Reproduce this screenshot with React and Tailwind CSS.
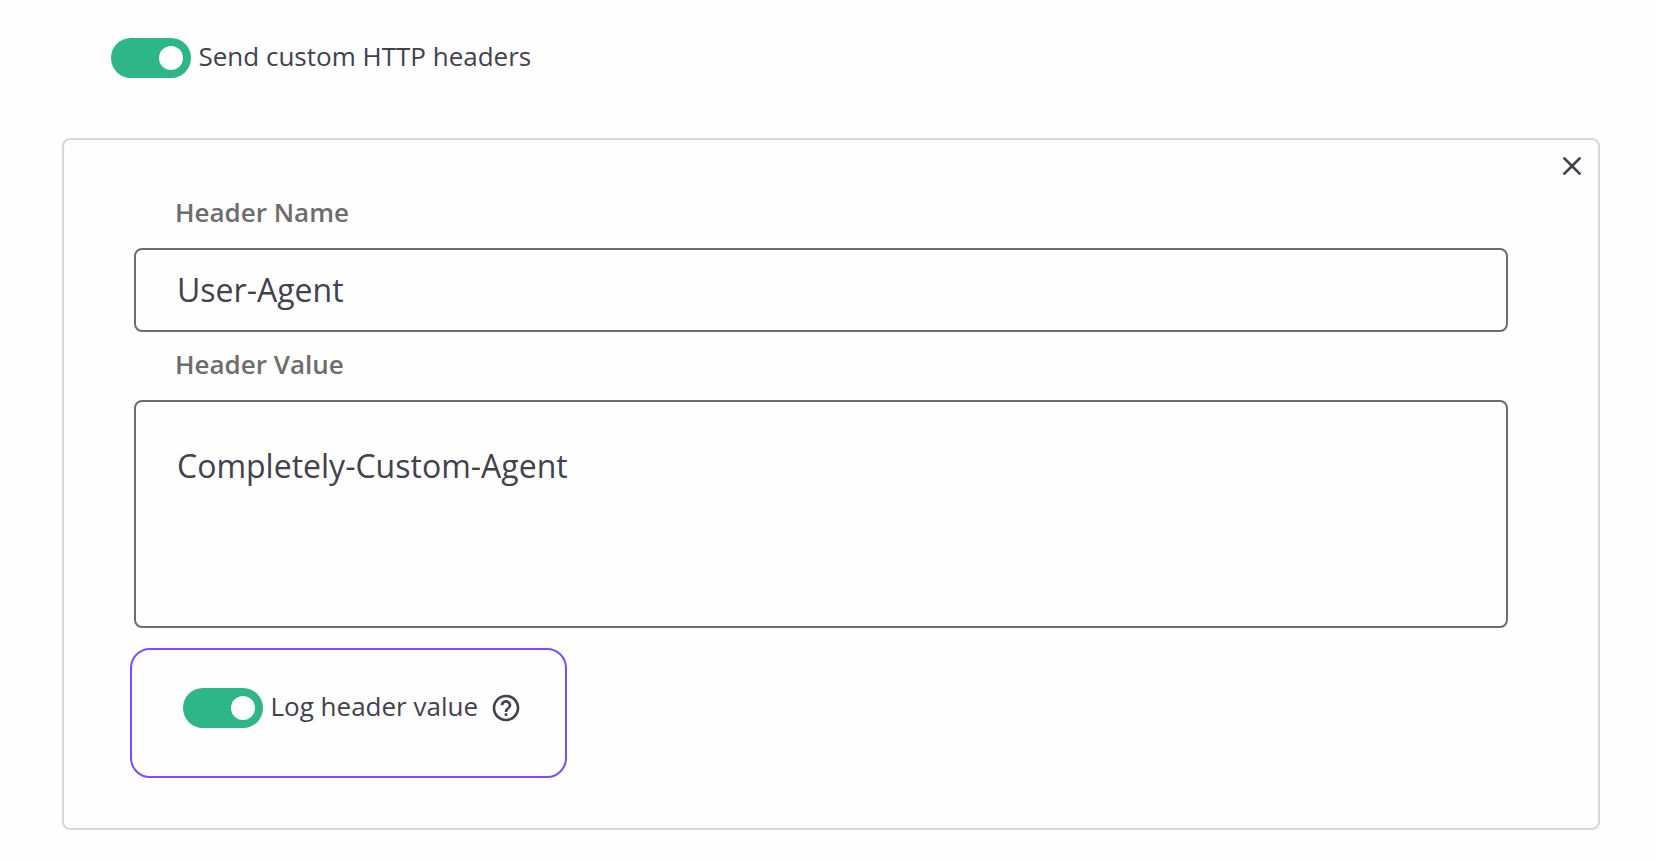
import React, { useState } from 'react';
import clsx from 'clsx';
import { MdClose, MdHelpOutline } from 'react-icons/md';

const Toggle = ({ checked, onChange, label, children }) => (
    <div className="flex h-10 items-center">
        <button
            type="button"
            role="switch"
            aria-checked={checked}
            aria-label={label}
            onClick={() => onChange(!checked)}
            className={clsx(
                'flex h-10 w-20 shrink-0 items-center rounded-full px-2',
                checked ? 'justify-end bg-[#2eb688]' : 'justify-start bg-[#b4b4b4]'
            )}
        >
            <span className="size-6 rounded-full bg-white" />
        </button>
        <span className="mb-1 ml-[7.5px] whitespace-nowrap text-[26px] leading-9">{label}</span>
        {children}
    </div>
);

const FieldLabel = ({ htmlFor, children }) => (
    <label
        htmlFor={htmlFor}
        className="mb-[18px] block pl-[41px] text-[26px] font-semibold leading-9 text-[#6d6d6d]"
    >
        {children}
    </label>
);

const App = () => {
    const [sendHeaders, setSendHeaders] = useState(true);
    const [logValue, setLogValue] = useState(true);
    const [name, setName] = useState('User-Agent');
    const [value, setValue] = useState('Completely-Custom-Agent');

    return (
        <div className="h-[860px] w-[1656px] bg-[#fefefe] pl-[62px] pr-14 pt-[38px] font-['Open_Sans','Noto_Sans',sans-serif] text-[#42414d]">
            <div className="mb-[60px] pl-[49px]">
                <Toggle checked={sendHeaders} onChange={setSendHeaders} label="Send custom HTTP headers" />
            </div>

            <div className="flex h-[692px] items-start rounded-lg border-2 border-[#d8d8d8] pl-[70px] pr-2.5">
                <div className="w-[1374px] shrink-0 pt-[54px]">
                    <FieldLabel htmlFor="header-name">Header Name</FieldLabel>
                    <input
                        id="header-name"
                        value={name}
                        onChange={(e) => setName(e.target.value)}
                        className="mb-3.5 block h-[84px] w-full rounded-lg border-2 border-[#6d6d6d] px-[41px] pb-0.5 text-[32px] leading-[44px] outline-none"
                    />
                    <FieldLabel htmlFor="header-value">Header Value</FieldLabel>
                    <textarea
                        id="header-value"
                        value={value}
                        onChange={(e) => setValue(e.target.value)}
                        className="block h-[228px] w-full resize-none rounded-lg border-2 border-[#6d6d6d] px-[41px] py-[42px] text-[32px] leading-[44px] outline-none"
                    />
                    <div className="-ml-1 mt-5 h-[130px] w-[437px] rounded-[20px] border-2 border-[#7c4dff] pl-[51px] pt-[38px]">
                        <Toggle checked={logValue} onChange={setLogValue} label="Log header value">
                            <MdHelpOutline className="ml-[11.5px] size-8 shrink-0" />
                        </Toggle>
                    </div>
                </div>
                <button type="button" aria-label="Remove header" className="ml-auto mt-2.5">
                    <MdClose className="size-8" />
                </button>
            </div>
        </div>
    );
};

export default App;
